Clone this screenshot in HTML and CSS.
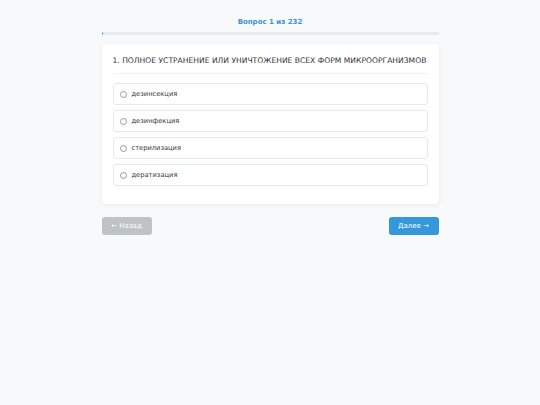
FILE: index.html
```html
<!DOCTYPE html>
<html lang="ru">
<head>
<meta charset="utf-8">
<link rel="stylesheet" href="styles.css">
</head>
<body>
<div class="wrap">
  <div class="counter">Вопрос 1 из 232</div>
  <div class="progress"><div class="progress-fill" style="width:0.43%"></div></div>
  <div class="card">
    <div class="question">1. ПОЛНОЕ УСТРАНЕНИЕ ИЛИ УНИЧТОЖЕНИЕ ВСЕХ ФОРМ МИКРООРГАНИЗМОВ</div>
    <div class="options">
      <label class="option"><span class="radio"></span><span>дезинсекция</span></label>
      <label class="option"><span class="radio"></span><span>дезинфекция</span></label>
      <label class="option"><span class="radio"></span><span>стерилизация</span></label>
      <label class="option"><span class="radio"></span><span>дератизация</span></label>
    </div>
  </div>
  <div class="nav">
    <button class="btn btn-back">← Назад</button>
    <button class="btn btn-next">Далее →</button>
  </div>
</div>
</body>
</html>
```
FILE: styles.css
```css
html, body {
  margin: 0;
  padding: 0;
  background: #f7f9fb;
  font-family: "DejaVu Sans", Verdana, sans-serif;
  color: #333;
}
.wrap {
  width: 337px;
  margin: 0 auto;
  padding-top: 17px;
}
.counter {
  text-align: center;
  font-size: 7px;
  font-weight: bold;
  color: #3a93d3;
  line-height: 10px;
}
.progress {
  margin-top: 5px;
  height: 3px;
  background: #e6ebef;
  border-radius: 2px;
  overflow: hidden;
}
.progress-fill {
  height: 100%;
  background: #3498db;
}
.card {
  margin-top: 9px;
  background: #fff;
  border-radius: 4px;
  box-shadow: 0 1px 4px rgba(0,0,0,0.07);
  padding: 11px 11px 18px;
}
.question {
  font-size: 7.6px;
  line-height: 12px;
  color: #333;
  padding-bottom: 6px;
  border-bottom: 1px solid #eef0f2;
  white-space: nowrap;
}
.options {
  margin-top: 9px;
  display: flex;
  flex-direction: column;
  gap: 5px;
}
.option {
  display: flex;
  align-items: center;
  height: 20px;
  border: 1px solid #e6e9ec;
  border-radius: 3px;
  padding: 0 0 0 6px;
  font-size: 6.7px;
  color: #3a3a3a;
}
.radio {
  width: 5px;
  height: 5px;
  border: 1px solid #999;
  border-radius: 50%;
  margin-right: 5px;
  box-sizing: content-box;
}
.nav {
  margin-top: 13px;
  display: flex;
  justify-content: space-between;
}
.btn {
  width: 50px;
  height: 18px;
  border: none;
  border-radius: 3px;
  color: #fff;
  font-family: "DejaVu Sans", Verdana, sans-serif;
  font-size: 7px;
  padding: 0;
}
.btn-back { background: #bdc3c7; }
.btn-next { background: #3498db; }
```
